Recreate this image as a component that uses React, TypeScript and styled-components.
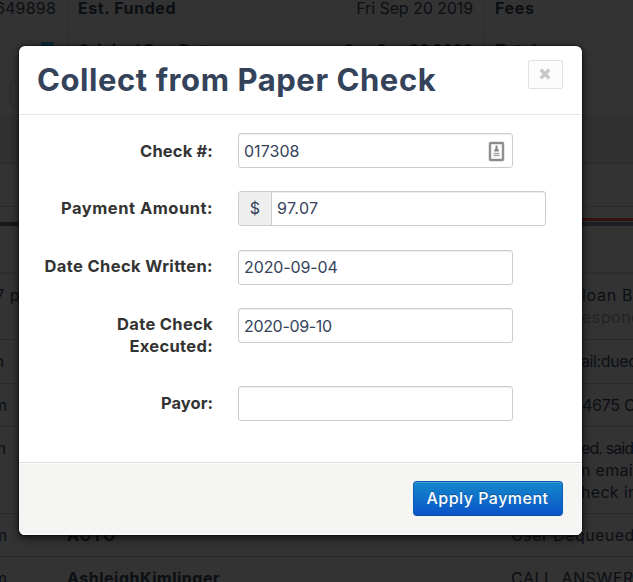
import React from 'react';
import styled, { createGlobalStyle } from 'styled-components';

const GlobalStyle = createGlobalStyle`
  * { box-sizing: border-box; }
  body { margin: 0; background: #333; overflow: hidden; }
  button, input { font: inherit; }
`;

const Page = styled.div`
  position: relative;
  width: 633px;
  height: 582px;
  overflow: hidden;
  background: #333;
  color: #0b0f14;
  font: 400 16px/22px Inter, 'Open Sans', sans-serif;
  white-space: nowrap;
`;

const Summary = styled.div`
  display: grid;
  grid-template-columns: 67px 417px 149px;
  height: 117px;
  border-bottom: 1px solid #2e2e2e;
`;

const SummaryColumn = styled.div<{ $divided?: boolean }>`
  display: flex;
  flex-direction: column;
  gap: 20px;
  margin-top: -3px;
  padding: 0 11px 0 10px;
  border-left: ${p => (p.$divided ? '1px solid #2b2e30' : '0')};
`;

const SummaryLine = styled.div<{ $end?: boolean }>`
  display: flex;
  height: 22px;
  flex: none;
  justify-content: ${p => (p.$end ? 'flex-end' : 'space-between')};
`;

const Text = styled.span<{ $bold?: boolean; $track?: number; $faint?: boolean }>`
  font-weight: ${p => (p.$bold ? 700 : 400)};
  letter-spacing: ${p => p.$track ?? 0}px;
  color: ${p => (p.$faint ? '#222325' : 'inherit')};
`;

const Flag = styled.div`
  width: 13px;
  height: 12px;
  margin: 3px 2px 0 0;
  background: #0d2737;
`;

const GhostButton = styled.div`
  width: 60px;
  height: 24px;
  flex: none;
  margin-top: 1px;
  border: 1px solid #292929;
  border-radius: 4px;
`;

const GreyBand = styled.div`
  height: 47px;
  background: #303030;
  border-bottom: 1px solid #2b2b2b;
`;

const Band = styled.div`
  height: 43px;
  border-bottom: 1px solid #2b2b2b;
`;

const TabStrip = styled.div`
  display: grid;
  grid-template-columns: 300px 1fr;
  height: 19px;
  padding-top: 11px;
`;

const TabEdge = styled.div<{ $active?: boolean }>`
  height: 8px;
  border-top: 3px solid ${p => (p.$active ? '#351010' : '#333')};
  border-bottom: 4px solid ${p => (p.$active ? '#1b1e22' : '#181818')};
`;

const LogHeader = styled.div`
  height: 48px;
  border-bottom: 2px solid #2d2d2d;
`;

const LogRow = styled.div<{ $height: number }>`
  display: grid;
  grid-template-columns: 67px 444px 122px;
  height: ${p => p.$height}px;
  padding-top: 10px;
  border-bottom: 1px solid #2a2a2a;
`;

const TimeCell = styled.div<{ $width: number }>`
  display: flex;
  justify-content: flex-end;
  width: ${p => p.$width}px;
`;

const NoteCell = styled.div<{ $indent?: number }>`
  display: flex;
  flex-direction: column;
  padding-left: ${p => p.$indent ?? 0}px;
`;

const Overlay = styled.div`
  position: absolute;
  inset: 0;
  padding: 46px 51px 47px 19px;
`;

const Modal = styled.form`
  display: flex;
  flex-direction: column;
  width: 563px;
  height: 489px;
  overflow: hidden;
  border-radius: 6px;
  background: #fff;
  box-shadow: 0 3px 8px rgba(0, 0, 0, 0.7), 0 0 1px 1px rgba(0, 0, 0, 0.4);
`;

const ModalHeader = styled.header`
  display: flex;
  justify-content: space-between;
  height: 69px;
  flex: none;
  margin-right: 1px;
  padding: 14px 18px 0 18px;
  border-bottom: 1px solid #e5e5e5;
`;

const Title = styled.h3`
  margin: 0;
  color: #34435a;
  font-size: 31px;
  line-height: 40px;
  font-weight: 700;
  letter-spacing: 0.57px;
`;

const CloseButton = styled.button`
  display: flex;
  align-items: center;
  justify-content: center;
  width: 35px;
  height: 29px;
  padding: 0 1px 1px 0;
  border: 1px solid #e2e2e2;
  border-radius: 2px;
  background: #fcfcfc;
`;

const ModalBody = styled.div`
  flex: 1;
  padding-top: 18px;
`;

const Field = styled.div<{ $height: number }>`
  display: grid;
  grid-template-columns: 194px auto;
  column-gap: 25px;
  align-items: start;
  justify-content: start;
  height: ${p => p.$height}px;
`;

const Label = styled.label<{ $track: number; $top: number }>`
  padding-top: ${p => p.$top}px;
  color: #333;
  font-size: 16.5px;
  font-weight: 700;
  letter-spacing: ${p => p.$track}px;
  text-align: right;
`;

const InputFrame = styled.div<{ $width: number }>`
  display: flex;
  align-items: center;
  width: ${p => p.$width}px;
  height: 35px;
  overflow: hidden;
  border: 1px solid #ccc;
  border-radius: 3px;
  background: #fff;
  box-shadow: inset 0 1px 1px rgba(0, 0, 0, 0.075);
`;

const Currency = styled.span`
  width: 33px;
  height: 33px;
  flex: none;
  border-right: 1px solid #ccc;
  background: #eee;
  color: #34435a;
  line-height: 33px;
  text-align: center;
`;

const Input = styled.input<{ $track?: number; $low?: boolean }>`
  flex: 1;
  min-width: 0;
  height: 33px;
  padding: ${p => (p.$low ? '1px 5px 0' : '0 5px 2px')};
  border: 0;
  outline: 0;
  background: transparent;
  color: #34435a;
  letter-spacing: ${p => p.$track ?? 0}px;
`;

const AutofillIcon = styled.svg`
  flex: none;
  margin: 2px 7px 0 0;
`;

const ModalFooter = styled.footer`
  display: flex;
  justify-content: flex-end;
  height: 73px;
  padding: 18px 19px 0;
  border-top: 1px solid #ddd;
  background: #f5f5f4;
  box-shadow: inset 0 1px 0 #fff, inset -1px -1px 0 #fff;
`;

const PrimaryButton = styled.button`
  width: 150px;
  height: 35px;
  padding: 0 1px 1px 0;
  border: 1px solid #0a5db0;
  border-bottom-color: #084c9e;
  border-radius: 4px;
  background: linear-gradient(#1488cc, #0b54c8);
  box-shadow: inset 0 1px 0 rgba(255, 255, 255, 0.2);
  color: #fff;
  font-weight: 500;
  letter-spacing: 0.48px;
  text-shadow: 0 -1px 0 rgba(0, 0, 0, 0.25);
`;

export default function App() {
  return (
    <>
      <GlobalStyle />
      <Page>
        <Summary>
          <SummaryColumn>
            <SummaryLine $end><Text $track={0.2}>649898</Text></SummaryLine>
            <SummaryLine $end><Flag /></SummaryLine>
            <GhostButton />
          </SummaryColumn>
          <SummaryColumn $divided>
            <SummaryLine>
              <Text $bold $track={0.59}>Est. Funded</Text>
              <Text $track={-0.09}>Fri Sep 20 2019</Text>
            </SummaryLine>
            <SummaryLine>
              <Text $bold $track={0.1}>Original Due Date</Text>
              <Text $bold $track={-0.33}>Sun Sep 20 2020</Text>
            </SummaryLine>
          </SummaryColumn>
          <SummaryColumn $divided>
            <SummaryLine><Text $bold $track={0.67}>Fees</Text></SummaryLine>
            <SummaryLine><Text $bold $track={0.63}>Total</Text></SummaryLine>
          </SummaryColumn>
        </Summary>
        <GreyBand />
        <Band />
        <TabStrip>
          <TabEdge />
          <TabEdge $active />
        </TabStrip>
        <LogHeader />
        <LogRow $height={66}>
          <TimeCell $width={20}><Text $track={0.5}>7 p</Text></TimeCell>
          <div />
          <NoteCell $indent={71}>
            <Text $track={0.69}>loan B</Text>
            <Text $faint $track={0.5}>espond</Text>
          </NoteCell>
        </LogRow>
        <LogRow $height={44}>
          <TimeCell $width={4}><Text>m</Text></TimeCell>
          <div />
          <NoteCell $indent={70}><Text $track={-0.4}>ail:duedate</Text></NoteCell>
        </LogRow>
        <LogRow $height={43}>
          <TimeCell $width={7}><Text>m</Text></TimeCell>
          <div />
          <NoteCell $indent={71}><Text $track={-0.3}>4675 CA</Text></NoteCell>
        </LogRow>
        <LogRow $height={87}>
          <TimeCell $width={6}><Text>m</Text></TimeCell>
          <div />
          <NoteCell $indent={70}>
            <Text $track={-0.9}>ed. said</Text>
            <Text $track={0.3}>n email</Text>
            <Text $track={0.3}>heck in</Text>
          </NoteCell>
        </LogRow>
        <LogRow $height={43}>
          <TimeCell $width={7}><Text>m</Text></TimeCell>
          <Text $bold $track={0.83}>AUTO</Text>
          <NoteCell><Text $track={0.42}>User Dequeued</Text></NoteCell>
        </LogRow>
        <LogRow $height={43}>
          <TimeCell $width={7}><Text>m</Text></TimeCell>
          <Text $bold $track={0.51}>AshleighKimlinger</Text>
          <NoteCell><Text $track={0.55}>CALL_ANSWERED</Text></NoteCell>
        </LogRow>

        <Overlay>
          <Modal onSubmit={e => e.preventDefault()}>
            <ModalHeader>
              <Title>Collect from Paper Check</Title>
              <CloseButton type="button" aria-label="Close">
                <svg width="14" height="14" viewBox="0 0 14 14">
                  <path d="M2.8 2.8l8.4 8.4M11.2 2.8l-8.4 8.4" stroke="#c8c8c8" strokeWidth="3.5" />
                </svg>
              </CloseButton>
            </ModalHeader>
            <ModalBody>
              <Field $height={58}>
                <Label $track={0.15} $top={7}>Check #:</Label>
                <InputFrame $width={275}>
                  <Input defaultValue="017308" $track={0.03} $low />
                  <AutofillIcon width="17" height="21" viewBox="0 0 17 21">
                    <rect x="2" y="2" width="13" height="17" rx="1" fill="#fff" stroke="#ccc" strokeWidth="3" />
                    <rect x="2" y="2" width="13" height="17" rx="0.5" fill="none" stroke="#8a8a8a" strokeWidth="1.8" />
                    <path d="M8.5 4.5v4" stroke="#8a8a8a" strokeWidth="2" />
                    <path d="M6 10.5q0-3 2.5-3t2.5 3z" fill="#8a8a8a" />
                    <path d="M5.5 12.5h6M5.5 14.5h6" stroke="#aaa" strokeWidth="1.4" />
                  </AutofillIcon>
                </InputFrame>
              </Field>
              <Field $height={59}>
                <Label $track={0.5} $top={6}>Payment Amount:</Label>
                <InputFrame $width={308}>
                  <Currency>$</Currency>
                  <Input defaultValue="97.07" $track={0.34} />
                </InputFrame>
              </Field>
              <Field $height={58}>
                <Label $track={0.37} $top={5}>Date Check Written:</Label>
                <InputFrame $width={275}><Input defaultValue="2020-09-04" $track={-0.11} /></InputFrame>
              </Field>
              <Field $height={78}>
                <Label $track={0.32} $top={5}>Date Check<br />Executed:</Label>
                <InputFrame $width={275}><Input defaultValue="2020-09-10" $track={-0.33} $low /></InputFrame>
              </Field>
              <Field $height={35}>
                <Label $track={0.05} $top={6}>Payor:</Label>
                <InputFrame $width={275}><Input defaultValue="" /></InputFrame>
              </Field>
            </ModalBody>
            <ModalFooter>
              <PrimaryButton type="submit">Apply Payment</PrimaryButton>
            </ModalFooter>
          </Modal>
        </Overlay>
      </Page>
    </>
  );
}
